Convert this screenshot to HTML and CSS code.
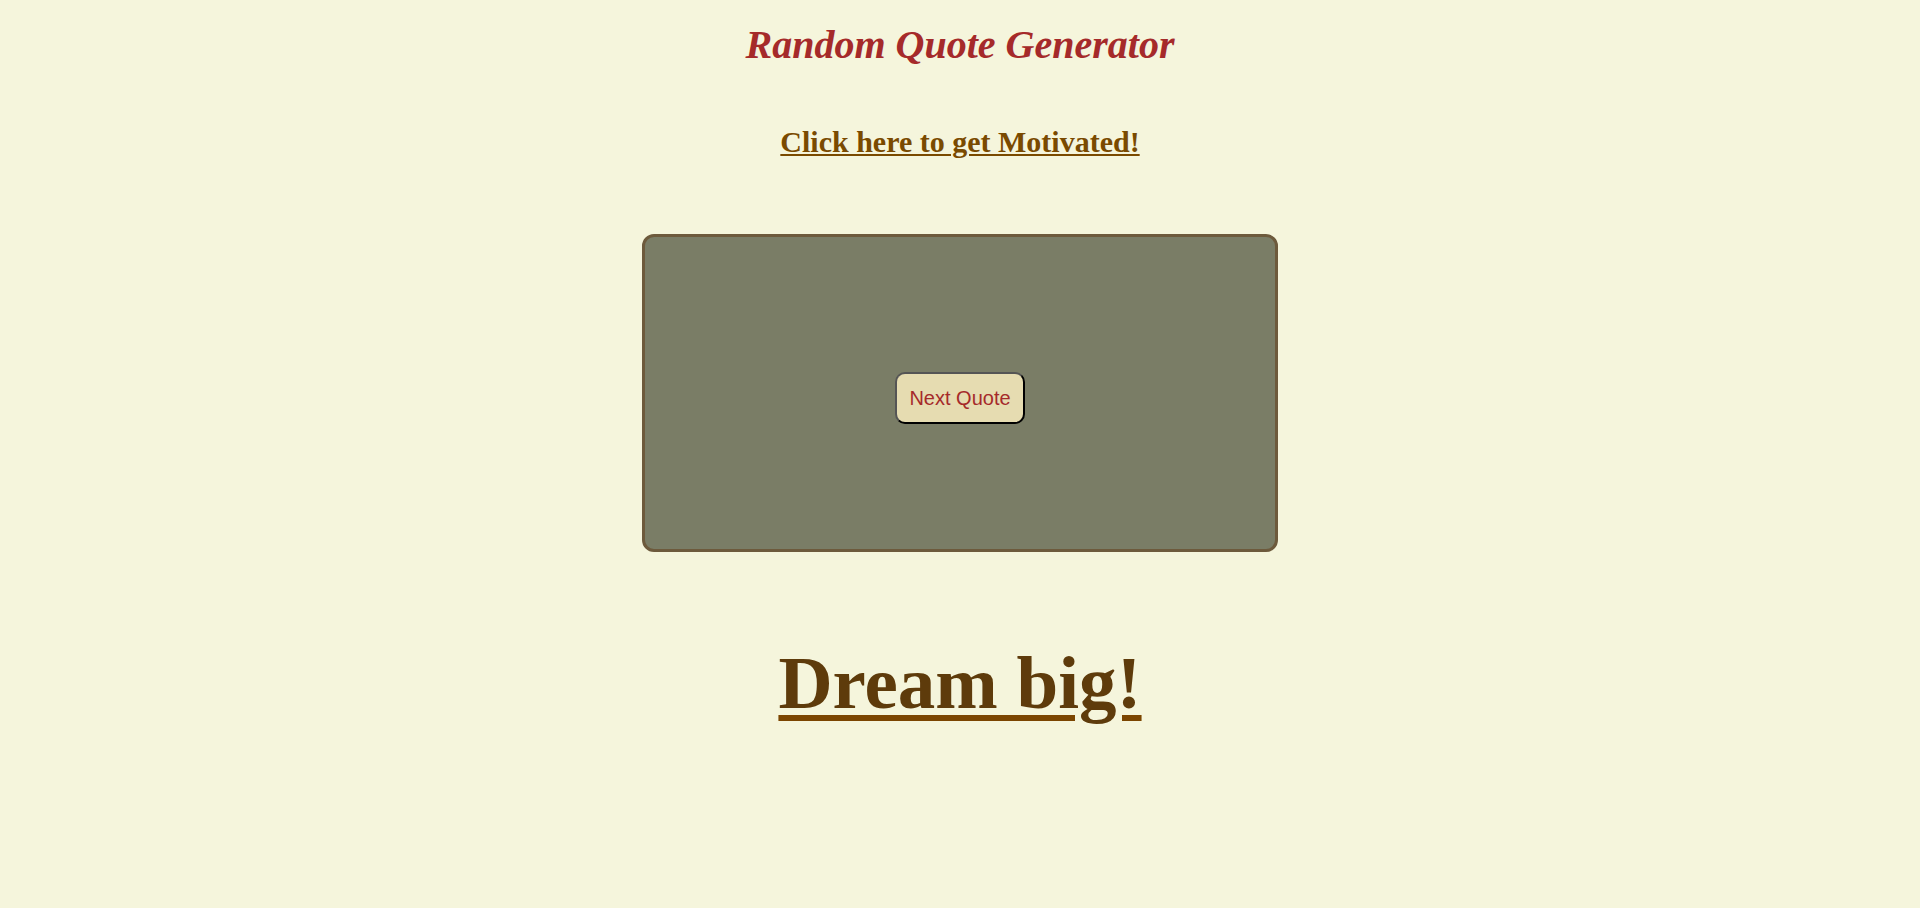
FILE: index.html
```html
<!DOCTYPE html>
<html lang="en">
<head>
<meta charset="utf-8">
<title>Random Quote Generator</title>
<link rel="stylesheet" href="styles.css">
</head>
<body>
<main class="page">
  <h1 class="title">Random Quote Generator</h1>
  <a class="motivate" href="#">Click here to get Motivated!</a>
  <section class="quote-box">
    <button class="next-btn" type="button">Next Quote</button>
  </section>
  <a class="quote" href="#">Dream big!</a>
</main>
</body>
</html>
```

FILE: styles.css
```css
html, body {
  margin: 0;
  padding: 0;
  background: #f5f5dc;
}

body {
  font-family: "Liberation Serif", "Times New Roman", serif;
  height: 908px;
}

.page {
  display: flex;
  flex-direction: column;
  align-items: center;
}

.title {
  margin: 22px 0 0;
  font-size: 40px;
  line-height: 46px;
  font-weight: bold;
  font-style: italic;
  color: #a52a2a;
}

.motivate {
  margin-top: 57px;
  font-size: 30px;
  line-height: 34px;
  font-weight: bold;
  color: #7a4a00;
  text-decoration: underline;
  text-decoration-thickness: 2px;
  text-underline-offset: 2px;
}

.quote-box {
  box-sizing: border-box;
  margin-top: 75px;
  width: 636px;
  height: 318px;
  padding-top: 10px;
  background: #7a7d66;
  border: 3px solid #6d5a3c;
  border-radius: 12px;
  display: flex;
  align-items: center;
  justify-content: center;
}

.next-btn {
  font-family: "Liberation Sans", Arial, sans-serif;
  font-size: 20px;
  line-height: 24px;
  padding: 12px;
  color: #a52a2a;
  background: #e6dcb1;
  border: 2px solid;
  border-color: #555555 #000000 #000000 #555555;
  border-radius: 10px;
}

.quote {
  margin-top: 88px;
  font-size: 75px;
  line-height: 86px;
  font-weight: bold;
  color: #5e3b0b;
  text-decoration: underline;
  text-decoration-color: #7b4500;
  text-decoration-thickness: 6px;
  text-underline-offset: 7px;
}
```
